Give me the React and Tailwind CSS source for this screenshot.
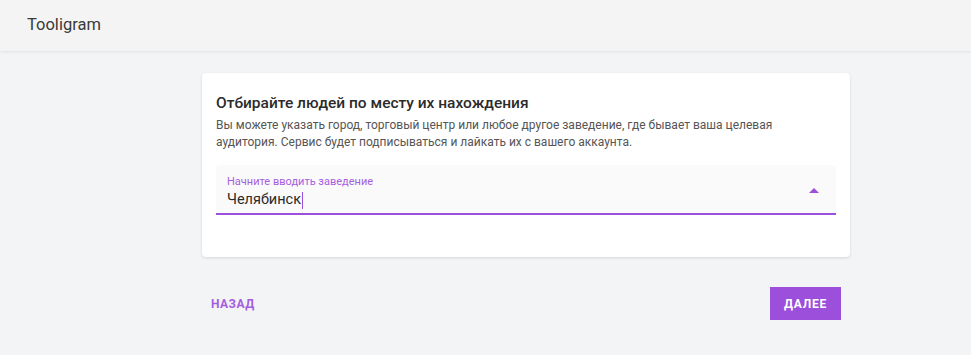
export default function App() {
  return (
    <div className="min-h-[355px] bg-[#f3f4f6] font-['Roboto',sans-serif]">
      <header className="h-[51px] bg-[#f4f4f4] flex items-center pl-[27px] shadow-[0_1px_3px_rgba(0,0,0,0.08)] relative">
        <span className="text-[16.5px] text-[#3a3a3a] leading-none">Tooligram</span>
      </header>
      <main className="pt-[22px] pl-[202px]">
        <div className="w-[648px] h-[184px] bg-white rounded-[4px] shadow-[0_1px_3px_rgba(0,0,0,0.12)] px-[14px] pt-[20px]">
          <h2 className="text-[15.5px] font-medium text-[#2b2b2b] leading-[20px]">
            Отбирайте людей по месту их нахождения
          </h2>
          <p className="mt-[4px] text-[12px] text-[#555] leading-[17px] pr-[40px]">
            Вы можете указать город, торговый центр или любое другое заведение, где бывает ваша целевая аудитория. Сервис будет подписываться и лайкать их с вашего аккаунта.
          </p>
          <div className="mt-[14px] h-[50px] bg-[#fafafa] border-b-2 border-[#9c4fdb] rounded-t-[4px] flex items-start pl-[11px] pr-[16px]">
            <div className="flex-1 flex flex-col pt-[10px]">
              <span className="text-[11px] text-[#a55ee0] leading-[14px]">Начните вводить заведение</span>
              <span className="text-[14.5px] text-[#2b2b2b] leading-[20px] flex items-center mt-[1px]">
                Челябинск<span className="inline-block w-[1px] h-[17px] bg-[#9c4fdb] ml-[1px]"></span>
              </span>
            </div>
            <svg width="12" height="7" viewBox="0 0 12 7" className="mt-[22px]">
              <path d="M1 6 L6 1 L11 6 Z" fill="#9c4fdb" />
            </svg>
          </div>
        </div>
        <div className="w-[639px] mt-[30px] flex items-center justify-between">
          <button className="h-[33px] px-[9px] text-[12px] font-bold tracking-[0.04em] text-[#a55ee0] uppercase">
            Назад
          </button>
          <button className="h-[33px] w-[71px] bg-[#9c4fdb] text-[12px] font-bold tracking-[0.06em] text-white uppercase">
            Далее
          </button>
        </div>
      </main>
    </div>
  );
}
